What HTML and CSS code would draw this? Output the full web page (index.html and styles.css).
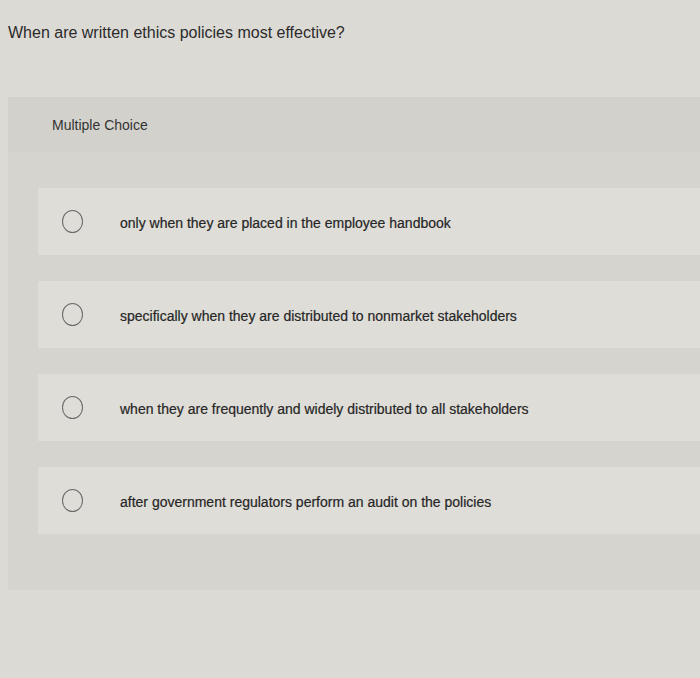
FILE: index.html
```html
<!DOCTYPE html>
<html>
<head>
<meta charset="utf-8">
<link rel="stylesheet" href="styles.css">
</head>
<body>
<div class="question">When are written ethics policies most effective?</div>
<div class="card">
  <div class="card-header">Multiple Choice</div>
  <div class="options">
    <div class="option"><span class="radio"></span><span class="label">only when they are placed in the employee handbook</span></div>
    <div class="option"><span class="radio"></span><span class="label">specifically when they are distributed to nonmarket stakeholders</span></div>
    <div class="option"><span class="radio"></span><span class="label">when they are frequently and widely distributed to all stakeholders</span></div>
    <div class="option"><span class="radio"></span><span class="label">after government regulators perform an audit on the policies</span></div>
  </div>
</div>
</body>
</html>
```
FILE: styles.css
```css
html, body {
  margin: 0;
  padding: 0;
}
body {
  width: 700px;
  height: 678px;
  overflow: hidden;
  background: #dcdad5;
  font-family: "Liberation Sans", Arial, sans-serif;
  color: #2b2b2b;
}
.question {
  font-size: 16px;
  padding: 24px 0 0 8px;
  height: 97px;
  box-sizing: border-box;
}
.card {
  margin-left: 8px;
  background: #d6d4cf;
  height: 493px;
}
.card-header {
  height: 55px;
  background: #d3d1cc;
  display: flex;
  align-items: center;
  padding-left: 44px;
  font-size: 14px;
  color: #333;
}
.options {
  padding: 36px 0 0 30px;
  display: flex;
  flex-direction: column;
  gap: 26px;
}
.option {
  height: 67px;
  background: #dfddd8;
  display: flex;
  align-items: center;
  padding-left: 24px;
}
.radio {
  width: 21px;
  height: 23px;
  border: 1.5px solid #6a6a6a;
  border-radius: 50%;
  box-sizing: border-box;
  flex: none;
}
.label {
  margin-left: 37px;
  margin-top: 2px;
  font-size: 14px;
  color: #262626;
  -webkit-text-stroke: 0.2px #262626;
}
```
